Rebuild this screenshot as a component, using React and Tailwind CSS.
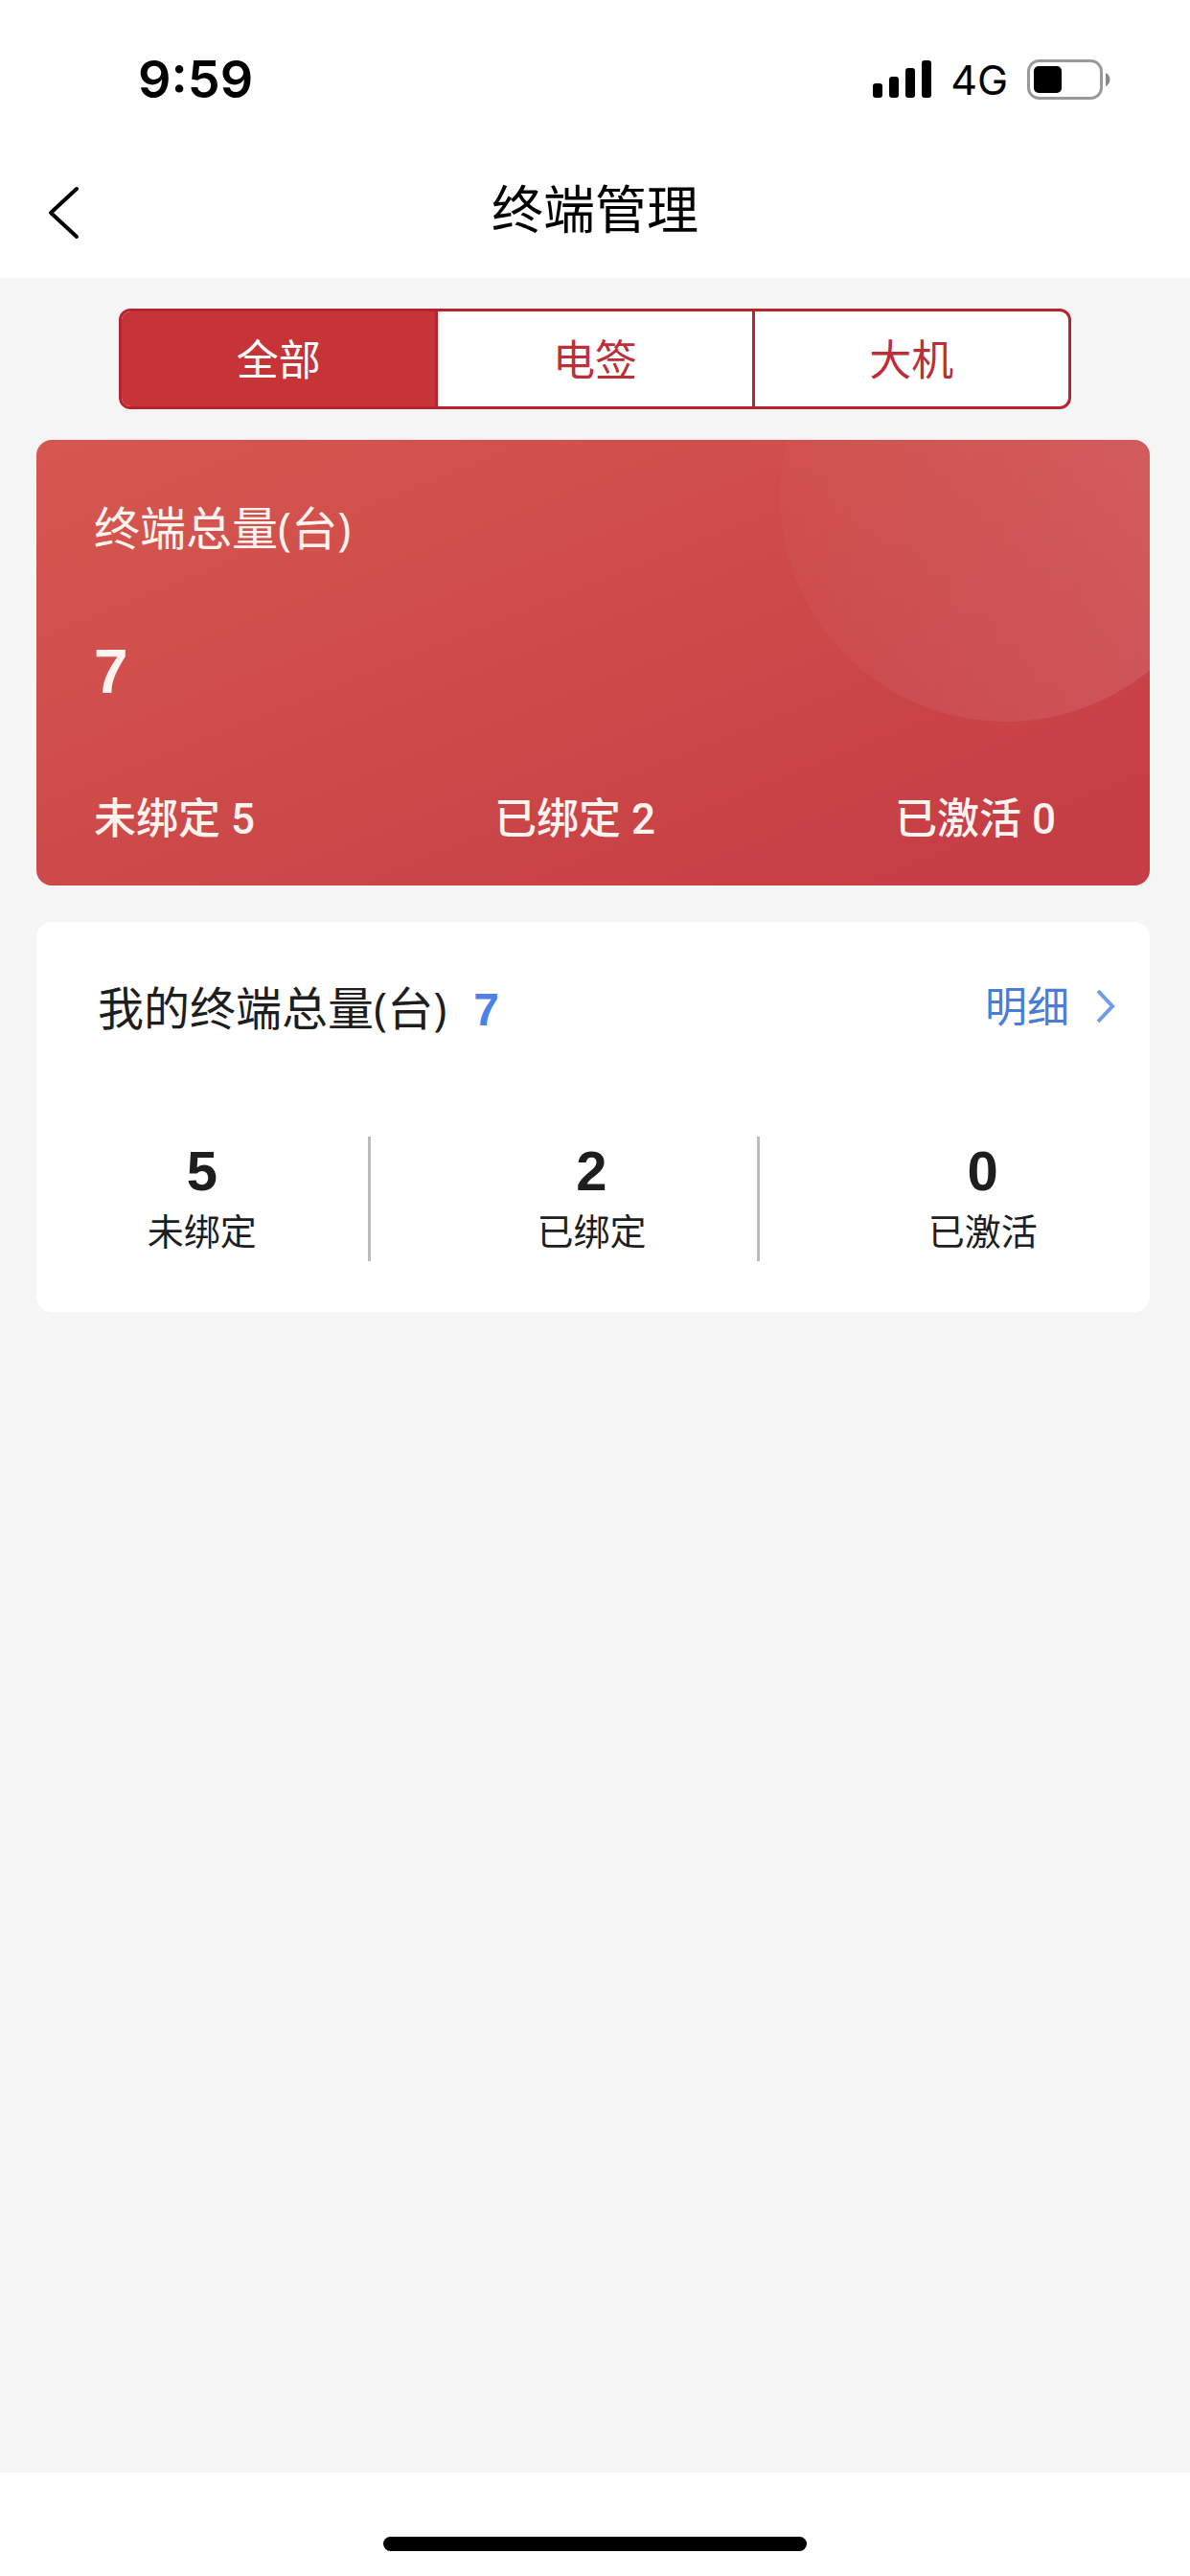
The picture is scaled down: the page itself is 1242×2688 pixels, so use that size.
import { useState } from 'react'

const tabs = ['全部', '电签', '大机']

const stats = [
  { label: '未绑定', value: 5 },
  { label: '已绑定', value: 2 },
  { label: '已激活', value: 0 },
]

function StatusBar() {
  return (
    <div className="flex h-[166px] items-center justify-between pl-36 pr-[83px]">
      <span className="font-['Inter','Liberation_Sans',sans-serif] text-[54px] leading-[60px] font-semibold">9:59</span>
      <div className="flex items-center">
        <svg className="h-10 w-[61px]" viewBox="0 0 61 40" fill="currentColor" aria-hidden="true">
          <rect x="0" y="24" width="10" height="15" rx="3" />
          <rect x="17" y="17" width="10" height="22" rx="3" />
          <rect x="34" y="8" width="10" height="31" rx="3" />
          <rect x="51" y="0" width="10" height="39" rx="3" />
        </svg>
        <span className="ml-5 font-['Inter','Liberation_Sans',sans-serif] text-[43px] leading-[48px]">4G</span>
        <svg className="ml-5 h-[42px] w-[87px]" viewBox="0 0 87 42" aria-hidden="true">
          <rect x="1.5" y="1.5" width="76" height="39" rx="11" fill="none" stroke="#999" strokeWidth="3" />
          <rect x="7" y="7" width="29" height="28" rx="5" fill="#000" />
          <path d="M82 14c6 3 6 11 0 14z" fill="#888" />
        </svg>
      </div>
    </div>
  )
}

function Header() {
  return (
    <header className="bg-white text-black">
      <StatusBar />
      <div className="grid h-[124px] grid-cols-3 items-start">
        <button type="button" aria-label="返回" className="ml-[46px] mt-6 w-10">
          <svg className="h-16 w-10" viewBox="0 0 40 64" fill="none" stroke="currentColor" strokeWidth="4" strokeLinecap="round" strokeLinejoin="round">
            <path d="M34 7 7 32l27 25" />
          </svg>
        </button>
        <h1 className="mt-3.5 text-center text-[54px] leading-[80px]">终端管理</h1>
      </div>
    </header>
  )
}

function Tabs() {
  const [active, setActive] = useState(0)

  return (
    <div className="mx-auto mt-8 flex h-[105px] w-4/5 overflow-hidden rounded-xl border-3 border-[#b7242e] bg-white">
      {tabs.map((tab, i) => (
        <button
          key={tab}
          type="button"
          onClick={() => setActive(i)}
          className={`flex-1 border-[#b7242e] pt-1 text-[44px] leading-[64px] not-last:border-r-3 ${
            i === active ? 'bg-[#c73438] text-white' : 'text-[#bd2f38]'
          }`}
        >
          {tab}
        </button>
      ))}
    </div>
  )
}

function TotalCard() {
  return (
    <section className="relative mt-8 h-[465px] overflow-hidden rounded-2xl bg-linear-to-br from-[#d6574f] to-[#c63e45] to-90% pt-14 pr-[98px] pl-[60px] text-[#fff3f0]">
      <div className="absolute -top-[178px] -right-[86px] size-[472px] rounded-full bg-linear-to-r from-white/2 to-white/12" />
      <h2 className="font-['Open_Sans','Noto_Sans_CJK_SC',sans-serif] text-[48px] leading-[72px]">终端总量(台)</h2>
      <p className="mt-[76px] text-[64px] leading-[76px] font-bold">7</p>
      <div className="mt-[84px] flex justify-between font-['Roboto','Noto_Sans_CJK_SC',sans-serif] text-[44px] leading-[64px] font-medium">
        {stats.map(({ label, value }) => (
          <span key={label}>
            {label} {value}
          </span>
        ))}
      </div>
    </section>
  )
}

function MyTerminals() {
  return (
    <section className="mt-[38px] h-[407px] rounded-2xl bg-white pt-[54px]">
      <div className="flex items-start justify-between pr-8 pl-16">
        <h2 className="font-['Open_Sans','Noto_Sans_CJK_SC',sans-serif] text-[48px] leading-[72px]">
          我的终端总量(台)
          <span className="ml-7 font-['Liberation_Sans',sans-serif] font-bold text-[#4d80e8]">7</span>
        </h2>
        <a href="#detail" className="flex items-start text-[44px] leading-[72px] text-[#4a7cd8]">
          明细
          <svg className="mt-3.5 ml-6 h-10 w-7" viewBox="0 0 28 40" fill="none" stroke="#6f9bea" strokeWidth="4" aria-hidden="true">
            <path d="m6 4 15 16L6 36" />
          </svg>
        </a>
      </div>
      <dl className="mt-24 flex justify-between">
        {stats.map(({ label, value }) => (
          <div key={label} className="flex h-[130px] w-[30%] flex-col-reverse justify-end border-[#bbb] text-center not-last:border-r-3">
            <dt className="mt-1.5 text-[38px] leading-[56px]">{label}</dt>
            <dd className="mt-1.5 text-[58px] leading-[60px] font-bold">{value}</dd>
          </div>
        ))}
      </dl>
    </section>
  )
}

export default function App() {
  return (
    <div className="flex min-h-screen flex-col bg-[#f5f5f6] font-['Liberation_Sans','Noto_Sans_CJK_SC',sans-serif] text-[#1e1e1e]">
      <Header />
      <main className="flex-1">
        <Tabs />
        <div className="pr-[42px] pl-[38px]">
          <TotalCard />
          <MyTerminals />
        </div>
      </main>
      <footer className="flex h-[108px] items-end justify-center bg-white pb-[26px]">
        <div className="h-[15px] w-[442px] rounded-full bg-black" />
      </footer>
    </div>
  )
}
